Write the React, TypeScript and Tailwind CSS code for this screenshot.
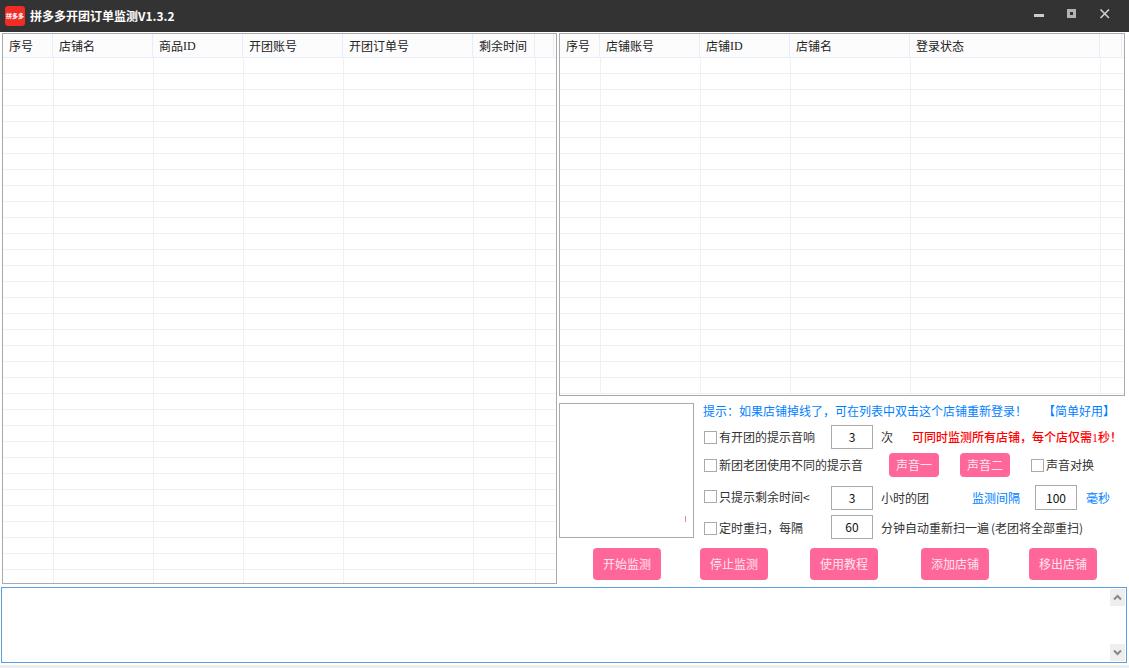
import React from "react";

const FONT = '"Noto Sans CJK SC", "Liberation Sans", sans-serif';
const SERIF = "font-['Liberation_Serif']";
const COLON = "\uFF1A";
const COMMA = "\uFF0C";
const BANG = "\uFF01";

function Table({ heads, bodyW, headW, height, rows }: { heads: React.ReactNode[]; bodyW: number[]; headW: number[]; height: string; rows: number }) {
  return (
    <div className={`${height} w-full border border-[#aaaaaa] bg-white overflow-hidden`}>
      <div className="flex h-[24px] bg-[#fcfcfc] border-b border-[#e8effa]">
        {headW.map((w, i) => (
          <div key={i} style={{ width: w }} className="shrink-0 h-full border-r border-[#e6eefb] pl-[6px] flex items-center text-[12px] leading-none text-[#222222] whitespace-nowrap">
            {heads[i]}
          </div>
        ))}
      </div>
      {Array.from({ length: rows }).map((_, r) => (
        <div key={r} className="flex h-[16px] border-b border-[#f0f0f0]">
          {bodyW.map((w, i) => (
            <div key={i} style={{ width: w }} className="shrink-0 h-full border-r border-[#f0f0f0]" />
          ))}
        </div>
      ))}
    </div>
  );
}

function Check({ label, width }: { label: string; width: string }) {
  return (
    <div className={`flex items-center shrink-0 ${width}`}>
      <span className="w-[13px] h-[13px] border border-[#aaaaaa] bg-white shrink-0" />
      <span className="ml-[2px] text-[12px] leading-none text-[#333333] whitespace-nowrap">{label}</span>
    </div>
  );
}

function Num({ v, cls = "" }: { v: string; cls?: string }) {
  return (
    <div className={`w-[42px] h-[24px] border border-[#aaaaaa] bg-white shrink-0 flex items-center justify-center text-[12px] leading-none text-[#111111] ${cls}`}>
      {v}
    </div>
  );
}

function Pink({ t, cls }: { t: string; cls: string }) {
  return (
    <div className={`bg-[#ff6699] rounded-[4px] flex items-center justify-center text-[12px] leading-none text-[#ffe6ee] shrink-0 ${cls}`}>
      {t}
    </div>
  );
}

export default function App() {
  return (
    <div className="w-[1129px] h-[668px] bg-white overflow-hidden flex flex-col" style={{ fontFamily: FONT }}>
      <div className="h-[32px] bg-[#333333] flex items-center shrink-0">
        <div className="ml-[5px] w-[20px] h-[20px] rounded-[3px] bg-[#f02c24] flex items-center justify-center text-[6px] leading-none font-bold text-white whitespace-nowrap overflow-hidden">
          拼多多
        </div>
        <div className="ml-[5px] text-[12px] leading-none font-bold text-white whitespace-nowrap">拼多多开团订单监测V1.3.2</div>
        <div className="ml-auto flex items-center">
          <svg width="12" height="12" viewBox="0 0 12 12" className="mr-[21px]">
            <rect x="1" y="4" width="10" height="3" fill="#cccccc" />
          </svg>
          <svg width="12" height="12" viewBox="0 0 12 12" className="mr-[21px] -translate-y-[1px]">
            <rect x="2.5" y="1.5" width="6" height="6" fill="none" stroke="#b4b4b4" strokeWidth="3" />
          </svg>
          <svg width="12" height="12" viewBox="0 0 12 12" className="mr-[18px] -translate-y-[1px]">
            <path d="M1.5 0.5 L10 9 M10 0.5 L1.5 9" stroke="#cccccc" strokeWidth="1.6" fill="none" />
          </svg>
        </div>
      </div>

      <div className="flex h-[555px] pt-[1px] shrink-0">
        <div className="ml-[2px] w-[555px]">
          <Table
            height="h-[551px]"
            rows={33}
            heads={["序号", "店铺名", <>商品<span className={SERIF}>ID</span></>, "开团账号", "开团订单号", "剩余时间", ""]}
            headW={[50, 100, 90, 100, 130, 62, 19]}
            bodyW={[51, 100, 90, 100, 130, 62]}
          />
        </div>
        <div className="ml-[2px] w-[566px] flex flex-col">
          <Table
            height="h-[363px]"
            rows={21}
            heads={["序号", "店铺账号", <>店铺<span className={SERIF}>ID</span></>, "店铺名", "登录状态", "", ""]}
            headW={[40, 100, 90, 120, 190, 22]}
            bodyW={[41, 100, 90, 120, 190]}
          />
          <div className="flex mt-[7px]">
            <div className="w-[135px] h-[135px] border border-[#aaaaaa] bg-white shrink-0 flex items-end justify-end pr-[7px] pb-[15px]">
              <span className="w-[1px] h-[6px] bg-[#e08a9c]" />
            </div>
            <div className="flex flex-col w-[431px]">
              <div className="flex items-center h-[16px] text-[12px] leading-none text-[#0080ff] whitespace-nowrap">
                <span className="ml-[9px]">{`提示${COLON}如果店铺掉线了${COMMA}可在列表中双击这个店铺重新登录${BANG}`}</span>
                <span className="ml-[16px]">【简单好用】</span>
              </div>
              <div className="flex items-center h-[24px] mt-[6px] ml-[10px]">
                <Check label="有开团的提示音响" width="w-[127px]" />
                <Num v="3" />
                <span className="ml-[8px] text-[12px] leading-none text-[#333333]">次</span>
                <span className="ml-[19px] text-[12px] leading-none text-[#ff0000] font-medium whitespace-nowrap">
                  {`可同时监测所有店铺${COMMA}每个店仅需`}<span className={SERIF}>1</span>{`秒${BANG}`}
                </span>
              </div>
              <div className="flex items-center h-[24px] mt-[4px] ml-[10px]">
                <Check label="新团老团使用不同的提示音" width="w-[185px]" />
                <Pink t="声音一" cls="w-[50px] h-[24px]" />
                <Pink t="声音二" cls="w-[50px] h-[24px] ml-[21px]" />
                <div className="ml-[21px]">
                  <Check label="声音对换" width="w-[80px]" />
                </div>
              </div>
              <div className="flex items-center h-[25px] mt-[8px] ml-[10px]">
                <div className="-translate-y-[1px]">
                  <Check label="只提示剩余时间<" width="w-[127px]" />
                </div>
                <Num v="3" />
                <span className="ml-[8px] text-[12px] leading-none text-[#333333] whitespace-nowrap w-[91px]">小时的团</span>
                <span className="text-[12px] leading-none text-[#0080ff] whitespace-nowrap w-[63px]">监测间隔</span>
                <Num v="100" cls="h-[25px]" />
                <span className="ml-[9px] text-[12px] leading-none text-[#0080ff] whitespace-nowrap">毫秒</span>
              </div>
              <div className="flex items-center h-[24px] mt-[5px] ml-[10px]">
                <div className="translate-y-[1px]">
                  <Check label={`定时重扫${COMMA}每隔`} width="w-[127px]" />
                </div>
                <Num v="60" />
                <span className="ml-[8px] translate-y-[1px] text-[12px] leading-none text-[#333333] whitespace-nowrap">
                  分钟自动重新扫一遍<span className="ml-[2px]">(</span>老团将全部重扫<span>)</span>
                </span>
              </div>
            </div>
          </div>
          <div className="flex mt-[9px] ml-[34px]">
            <Pink t="开始监测" cls="w-[68px] h-[32px]" />
            <Pink t="停止监测" cls="w-[68px] h-[32px] ml-[39px]" />
            <Pink t="使用教程" cls="w-[68px] h-[32px] ml-[42px]" />
            <Pink t="添加店铺" cls="w-[68px] h-[32px] ml-[43px]" />
            <Pink t="移出店铺" cls="w-[68px] h-[32px] ml-[40px]" />
          </div>
        </div>
      </div>

      <div className="ml-[1px] w-[1126px] h-[76px] border border-[#5aa0e0] bg-white shrink-0 flex justify-end pr-[1px] pt-[1px] pb-[1px]">
        <div className="w-[15px] flex flex-col justify-between">
          <div className="h-[17px] bg-[#eeeeee] flex items-center justify-center">
            <svg width="9" height="7" viewBox="0 0 9 7"><path d="M1 5.5 L4.5 2 L8 5.5" stroke="#888888" strokeWidth="2" fill="none" /></svg>
          </div>
          <div className="h-[17px] bg-[#eeeeee] flex items-center justify-center">
            <svg width="9" height="7" viewBox="0 0 9 7"><path d="M1 1.5 L4.5 5 L8 1.5" stroke="#888888" strokeWidth="2" fill="none" /></svg>
          </div>
        </div>
      </div>
      <div className="mt-[2px] flex-1 bg-[#eeeeee]" />
    </div>
  );
}
